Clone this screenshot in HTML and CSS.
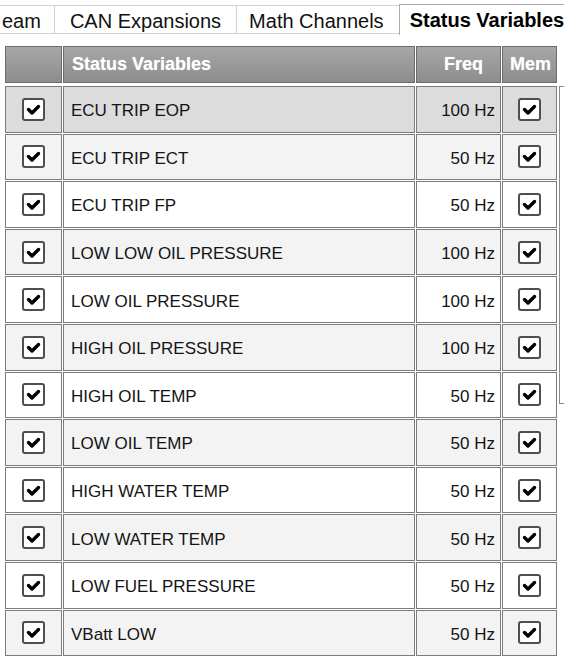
FILE: index.html
```html
<!DOCTYPE html>
<html>
<head>
<meta charset="utf-8">
<title>Status Variables</title>
<link rel="stylesheet" href="styles.css">
</head>
<body>
<div class="tabs">
  <div class="tab first">eam</div>
  <div class="tab">CAN Expansions</div>
  <div class="tab math">Math Channels</div>
  <div class="tab active">Status Variables</div>
</div>
<div class="content">
  <div class="grid">
    <table class="head">
      <tr>
        <th class="c1"></th>
        <th class="c2 hname">Status Variables</th>
        <th class="c3 hfreq">Freq</th>
        <th class="c4 hmem">Mem</th>
      </tr>
    </table>
    <table class="body">
      <tr class="sel">
        <td class="c1 ck"><span class="cb"><svg viewBox="0 0 19 19"><path d="M4.5 9.5 L8 13 L14.5 6.5"/></svg></span></td>
        <td class="c2 name">ECU TRIP EOP</td>
        <td class="c3 freq">100 Hz</td>
        <td class="c4 ck"><span class="cb"><svg viewBox="0 0 19 19"><path d="M4.5 9.5 L8 13 L14.5 6.5"/></svg></span></td>
      </tr>
      <tr class="alt">
        <td class="ck"><span class="cb"><svg viewBox="0 0 19 19"><path d="M4.5 9.5 L8 13 L14.5 6.5"/></svg></span></td>
        <td class="name">ECU TRIP ECT</td>
        <td class="freq">50 Hz</td>
        <td class="ck"><span class="cb"><svg viewBox="0 0 19 19"><path d="M4.5 9.5 L8 13 L14.5 6.5"/></svg></span></td>
      </tr>
      <tr>
        <td class="ck"><span class="cb"><svg viewBox="0 0 19 19"><path d="M4.5 9.5 L8 13 L14.5 6.5"/></svg></span></td>
        <td class="name">ECU TRIP FP</td>
        <td class="freq">50 Hz</td>
        <td class="ck"><span class="cb"><svg viewBox="0 0 19 19"><path d="M4.5 9.5 L8 13 L14.5 6.5"/></svg></span></td>
      </tr>
      <tr class="alt">
        <td class="ck"><span class="cb"><svg viewBox="0 0 19 19"><path d="M4.5 9.5 L8 13 L14.5 6.5"/></svg></span></td>
        <td class="name">LOW LOW OIL PRESSURE</td>
        <td class="freq">100 Hz</td>
        <td class="ck"><span class="cb"><svg viewBox="0 0 19 19"><path d="M4.5 9.5 L8 13 L14.5 6.5"/></svg></span></td>
      </tr>
      <tr>
        <td class="ck"><span class="cb"><svg viewBox="0 0 19 19"><path d="M4.5 9.5 L8 13 L14.5 6.5"/></svg></span></td>
        <td class="name">LOW OIL PRESSURE</td>
        <td class="freq">100 Hz</td>
        <td class="ck"><span class="cb"><svg viewBox="0 0 19 19"><path d="M4.5 9.5 L8 13 L14.5 6.5"/></svg></span></td>
      </tr>
      <tr class="alt">
        <td class="ck"><span class="cb"><svg viewBox="0 0 19 19"><path d="M4.5 9.5 L8 13 L14.5 6.5"/></svg></span></td>
        <td class="name">HIGH OIL PRESSURE</td>
        <td class="freq">100 Hz</td>
        <td class="ck"><span class="cb"><svg viewBox="0 0 19 19"><path d="M4.5 9.5 L8 13 L14.5 6.5"/></svg></span></td>
      </tr>
      <tr>
        <td class="ck"><span class="cb"><svg viewBox="0 0 19 19"><path d="M4.5 9.5 L8 13 L14.5 6.5"/></svg></span></td>
        <td class="name">HIGH OIL TEMP</td>
        <td class="freq">50 Hz</td>
        <td class="ck"><span class="cb"><svg viewBox="0 0 19 19"><path d="M4.5 9.5 L8 13 L14.5 6.5"/></svg></span></td>
      </tr>
      <tr class="alt">
        <td class="ck"><span class="cb"><svg viewBox="0 0 19 19"><path d="M4.5 9.5 L8 13 L14.5 6.5"/></svg></span></td>
        <td class="name">LOW OIL TEMP</td>
        <td class="freq">50 Hz</td>
        <td class="ck"><span class="cb"><svg viewBox="0 0 19 19"><path d="M4.5 9.5 L8 13 L14.5 6.5"/></svg></span></td>
      </tr>
      <tr>
        <td class="ck"><span class="cb"><svg viewBox="0 0 19 19"><path d="M4.5 9.5 L8 13 L14.5 6.5"/></svg></span></td>
        <td class="name">HIGH WATER TEMP</td>
        <td class="freq">50 Hz</td>
        <td class="ck"><span class="cb"><svg viewBox="0 0 19 19"><path d="M4.5 9.5 L8 13 L14.5 6.5"/></svg></span></td>
      </tr>
      <tr class="alt">
        <td class="ck"><span class="cb"><svg viewBox="0 0 19 19"><path d="M4.5 9.5 L8 13 L14.5 6.5"/></svg></span></td>
        <td class="name">LOW WATER TEMP</td>
        <td class="freq">50 Hz</td>
        <td class="ck"><span class="cb"><svg viewBox="0 0 19 19"><path d="M4.5 9.5 L8 13 L14.5 6.5"/></svg></span></td>
      </tr>
      <tr>
        <td class="ck"><span class="cb"><svg viewBox="0 0 19 19"><path d="M4.5 9.5 L8 13 L14.5 6.5"/></svg></span></td>
        <td class="name">LOW FUEL PRESSURE</td>
        <td class="freq">50 Hz</td>
        <td class="ck"><span class="cb"><svg viewBox="0 0 19 19"><path d="M4.5 9.5 L8 13 L14.5 6.5"/></svg></span></td>
      </tr>
      <tr class="alt">
        <td class="ck"><span class="cb"><svg viewBox="0 0 19 19"><path d="M4.5 9.5 L8 13 L14.5 6.5"/></svg></span></td>
        <td class="name">VBatt LOW</td>
        <td class="freq">50 Hz</td>
        <td class="ck"><span class="cb"><svg viewBox="0 0 19 19"><path d="M4.5 9.5 L8 13 L14.5 6.5"/></svg></span></td>
      </tr>
    </table>
  </div>
  <div class="side"></div>
</div>
</body>
</html>
```

FILE: styles.css
```css
html, body {
  margin: 0;
  padding: 0;
  background: #ffffff;
}
body {
  width: 564px;
  height: 666px;
  overflow: hidden;
  font-family: "Liberation Sans", Arial, sans-serif;
  color: #1a1a1a;
}

/* Tabs */
.tabs {
  display: flex;
  align-items: flex-end;
  height: 31px;
  margin-top: 4px;
  white-space: nowrap;
  overflow: hidden;
}
.tab {
  box-sizing: border-box;
  height: 29px;
  margin-bottom: 1px;
  border: 1px solid #d2d2d2;
  border-left: none;
  background: #ffffff;
  padding: 2px 15px 0 15px;
  font-size: 20px;
  line-height: 26px;
  color: #111111;
  flex: none;
}
.tab.first {
  padding: 2px 13px 0 2px;
}
.tab.math {
  padding: 2px 15px 0 12px;
}
.tab.active {
  height: 31px;
  margin-bottom: 0;
  margin-left: -1px;
  border: 1px solid #a9a9a9;
  border-bottom: none;
  border-right: none;
  padding: 1px 0 0 10px;
  font-weight: bold;
  line-height: 29px;
  color: #000000;
}

/* Content */
.content {
  display: flex;
  margin-top: 10px;
}
.grid {
  margin-left: 4px;
  flex: none;
}
table {
  border-collapse: separate;
  border-spacing: 1px;
  table-layout: fixed;
  width: 554px;
}
th, td {
  box-sizing: border-box;
  padding: 0;
}
.c1 { width: 57px; }
.c2 { width: 352px; }
.c3 { width: 85px; }
.c4 { width: 55px; }

.head th {
  height: 37px;
  border: 1px solid #6c6c6c;
  background: linear-gradient(#a7a7a7, #8d8d8d);
  color: #ffffff;
  font-size: 18px;
  font-weight: bold;
  text-shadow: 0 0 1px rgba(255, 255, 255, 0.5);
  vertical-align: middle;
  white-space: nowrap;
  overflow: visible;
}
.head .hname {
  text-align: left;
  padding-left: 8px;
}
.head .hfreq {
  text-align: right;
  padding-right: 17px;
}
.head .hmem {
  text-align: left;
  padding-left: 7px;
}

.body {
  margin-top: 1px;
}
.body td {
  height: 46.6px;
  border: 1px solid #7c7c7c;
  background: #ffffff;
  vertical-align: middle;
  font-size: 17px;
  color: #141414;
  white-space: nowrap;
}
.body tr.alt td {
  background: #f3f3f3;
}
.body tr.sel td {
  background: #dcdcdc;
}
.body .name {
  padding-left: 7px;
  padding-top: 4px;
}
.body .freq {
  text-align: right;
  padding-right: 5px;
  padding-top: 4px;
}
.body .ck {
  text-align: center;
}

.cb {
  display: inline-block;
  box-sizing: border-box;
  width: 23px;
  height: 23px;
  border: 2px solid #4f4f4f;
  border-radius: 3px;
  background: #ffffff;
  vertical-align: middle;
}
.cb svg {
  display: block;
  width: 19px;
  height: 19px;
}
.cb path {
  fill: none;
  stroke: #000000;
  stroke-width: 3.4;
  stroke-linecap: round;
  stroke-linejoin: round;
}

.side {
  flex: none;
  box-sizing: border-box;
  width: 10px;
  height: 318px;
  margin-top: 41px;
  margin-left: 1px;
  border: 1px solid #8a8a8a;
  border-right: none;
}
```
